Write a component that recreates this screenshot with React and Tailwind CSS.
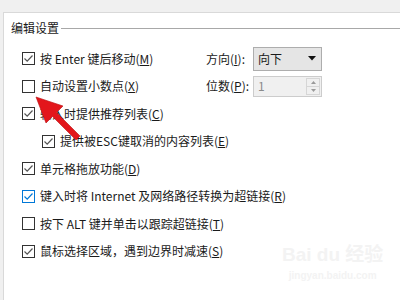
import React from "react";

const font = { fontFamily: '"Noto Sans CJK SC", "Noto Sans", sans-serif' };

const Box = ({ checked, focus }) => (
  <span
    className={`flex items-center justify-center w-[13px] h-[13px] shrink-0 bg-white border ${
      focus ? "border-[#0078d7]" : "border-[#333333]"
    }`}
  >
    {checked && (
      <svg width="11" height="11" viewBox="0 0 11 11">
        <path
          d="M1.5 5.5 L4.2 8.2 L9.5 2.5"
          fill="none"
          stroke={focus ? "#0078d7" : "#555555"}
          strokeWidth="1.2"
        />
      </svg>
    )}
  </span>
);

const Row = ({ checked, focus, indent, children, right }) => (
  <div className="flex items-center h-[27.5px]">
    <div className={`flex items-center gap-[5px] ${indent ? "pl-[38px]" : "pl-[18px]"} w-[202px]`}>
      <Box checked={checked} focus={focus} />
      <span className="whitespace-nowrap">{children}</span>
    </div>
    {right}
  </div>
);

export default function App() {
  return (
    <div className="relative w-[400px] h-[300px] bg-[#f0f0f0] pt-[12px] pl-[3px] overflow-hidden text-[12px] text-[#1a1a1a]" style={font}>
      <div className="h-full bg-white border-t border-l border-[#d9d9d9] pt-[8px]">
        <div className="flex items-center h-[14px] pl-[7px]">
          <span className="whitespace-nowrap">编辑设置</span>
          <div className="flex-1 h-px bg-[#a8a8a8] ml-[2px]" />
        </div>
        <div className="mt-[10px]">
          <Row
            checked
            right={
              <div className="flex items-center">
                <span className="w-[47px] whitespace-nowrap">方向(<u>I</u>):</span>
                <div className="flex items-center justify-between w-[69px] h-[24px] bg-[#e5e5e5] border border-[#adadad] pl-[4px] pr-[5px]">
                  <span>向下</span>
                  <svg width="8" height="5" viewBox="0 0 8 5">
                    <path d="M0 0 H8 L4 4.5 Z" fill="#111" />
                  </svg>
                </div>
              </div>
            }
          >
            按 Enter 键后移动(<u>M</u>)
          </Row>
          <Row
            right={
              <div className="flex items-center">
                <span className="w-[47px] whitespace-nowrap">位数(<u>P</u>):</span>
                <div className="flex items-center justify-between w-[69px] h-[21px] bg-[#f0f0f0] border border-[#cccccc] pl-[4px] pr-[1px]">
                  <span className="text-[#8a8a8a]">1</span>
                  <div className="flex flex-col w-[14px] h-[17px] border border-[#d6d6d6]">
                    <div className="flex-1 flex items-center justify-center border-b border-[#d6d6d6]">
                      <svg width="5" height="3" viewBox="0 0 5 3"><path d="M0 3 L2.5 0 L5 3 Z" fill="#9a9a9a" /></svg>
                    </div>
                    <div className="flex-1 flex items-center justify-center">
                      <svg width="5" height="3" viewBox="0 0 5 3"><path d="M0 0 L5 0 L2.5 3 Z" fill="#9a9a9a" /></svg>
                    </div>
                  </div>
                </div>
              </div>
            }
          >
            自动设置小数点(<u>X</u>)
          </Row>
          <Row checked>输入时提供推荐列表(<u>C</u>)</Row>
          <Row checked indent>提供被ESC键取消的内容列表(<u>E</u>)</Row>
          <Row checked>单元格拖放功能(<u>D</u>)</Row>
          <Row checked focus>键入时将 Internet 及网络路径转换为超链接(<u>R</u>)</Row>
          <Row>按下 ALT 键并单击以跟踪超链接(<u>T</u>)</Row>
          <Row checked>鼠标选择区域，遇到边界时减速(<u>S</u>)</Row>
        </div>
      </div>

      {/* watermark */}
      <div className="absolute left-[282px] top-[245px] flex flex-col items-center text-[#f3f3f3]" style={{ fontFamily: '"Liberation Sans", "Noto Sans CJK SC", sans-serif' }}>
        <span className="text-[19px] font-bold leading-none">Bai du 经验</span>
        <span className="text-[10px] font-bold mt-[4px]">jingyan.baidu.com</span>
      </div>

      {/* red arrow */}
      <svg className="absolute left-0 top-0" width="400" height="300" viewBox="0 0 400 300">
        <polygon
          points="36,97 63,106 56.5,112.5 80,136 76,140 52.5,116.5 46,123"
          fill="#e3161b"
          stroke="#b80f12"
          strokeWidth="0.6"
        />
      </svg>
    </div>
  );
}
